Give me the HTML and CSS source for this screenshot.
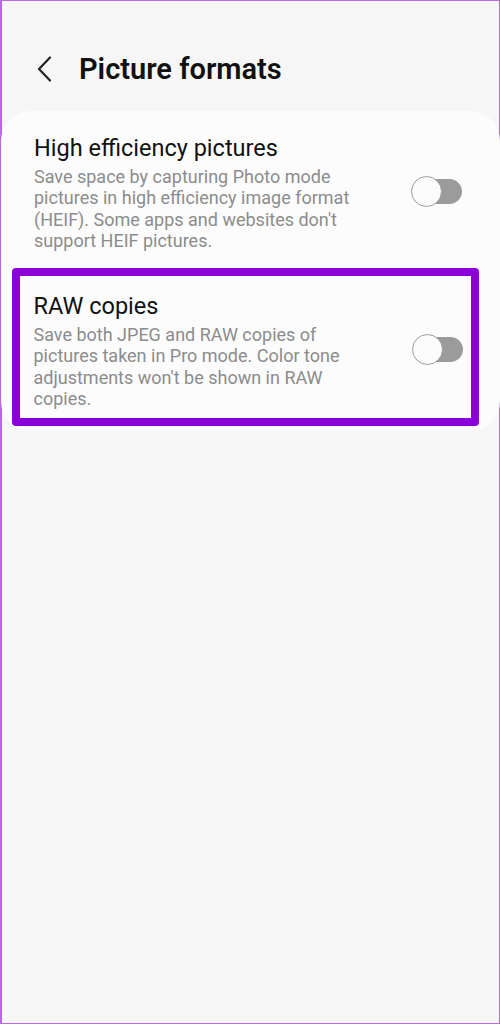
FILE: index.html
```html
<!DOCTYPE html>
<html lang="en">
<head>
<meta charset="utf-8">
<title>Picture formats</title>
<link rel="stylesheet" href="styles.css">
</head>
<body>
<div class="frame">
  <header class="header">
    <svg class="back" width="16" height="26" viewBox="0 0 16 26" aria-hidden="true">
      <path d="M13 1.5 L2 13 L13 24.5" fill="none" stroke="#222" stroke-width="2.2" stroke-linecap="round" stroke-linejoin="round"/>
    </svg>
    <h1 class="title">Picture formats</h1>
  </header>
  <section class="card">
    <div class="item item-first">
      <div class="text">
        <div class="item-title">High efficiency pictures</div>
        <div class="item-desc">Save space by capturing Photo mode<br>pictures in high efficiency image format<br>(HEIF). Some apps and websites don't<br>support HEIF pictures.</div>
      </div>
      <div class="switch switch-first"><span class="knob"></span></div>
    </div>
    <div class="item item-highlight">
      <div class="text">
        <div class="item-title">RAW copies</div>
        <div class="item-desc">Save both JPEG and RAW copies of<br>pictures taken in Pro mode. Color tone<br>adjustments won't be shown in RAW<br>copies.</div>
      </div>
      <div class="switch switch-second"><span class="knob"></span></div>
    </div>
  </section>
</div>
</body>
</html>
```

FILE: styles.css
```css
* { box-sizing: border-box; }
html, body { margin: 0; padding: 0; }
body {
  background: #f6f6f6;
  font-family: Roboto, "Noto Sans", "Liberation Sans", sans-serif;
}
.frame {
  width: 500px;
  height: 1024px;
  border: 1px solid #b36ae4;
  border-left-width: 2px;
  background: #f6f6f6;
}
.header {
  height: 110px;
  display: flex;
  align-items: center;
  padding-left: 35px;
  padding-top: 26px;
}
.back { display: block; flex: none; }
.title {
  margin: 0 0 0 26px;
  font-size: 29px;
  font-weight: 600;
  color: #111;
  white-space: nowrap;
}
.card {
  background: #fcfcfc;
  border-radius: 30px;
  padding: 0 0 5px 0;
  margin: 0 -1px 0 -1px;
}
.item {
  display: flex;
  align-items: center;
}
.item-first {
  padding: 23px 38px 17px 33px;
}
.item-highlight {
  margin: 0 21px 0 11px;
  border: 8.5px solid #8a00d6;
  border-radius: 4px;
  padding: 16px 8.5px 9px 13.5px;
}
.text { flex: 1; white-space: nowrap; }
.item-title {
  font-size: 23.5px;
  line-height: 28px;
  color: #111;
}
.item-desc {
  margin-top: 4px;
  font-size: 18px;
  line-height: 21.3px;
  color: #8c8c8c;
}
.switch {
  position: relative;
  flex: none;
  width: 49px;
  height: 25px;
  border-radius: 13px;
  background: #9b9b9b;
}
.switch-first { margin-top: -2px; }
.switch-second { margin-top: -3px; }
.knob {
  position: absolute;
  left: -2px;
  top: -3px;
  width: 31px;
  height: 31px;
  border-radius: 50%;
  background: #fbfbfb;
  border: 1.6px solid #9d9d9d;
}
```
